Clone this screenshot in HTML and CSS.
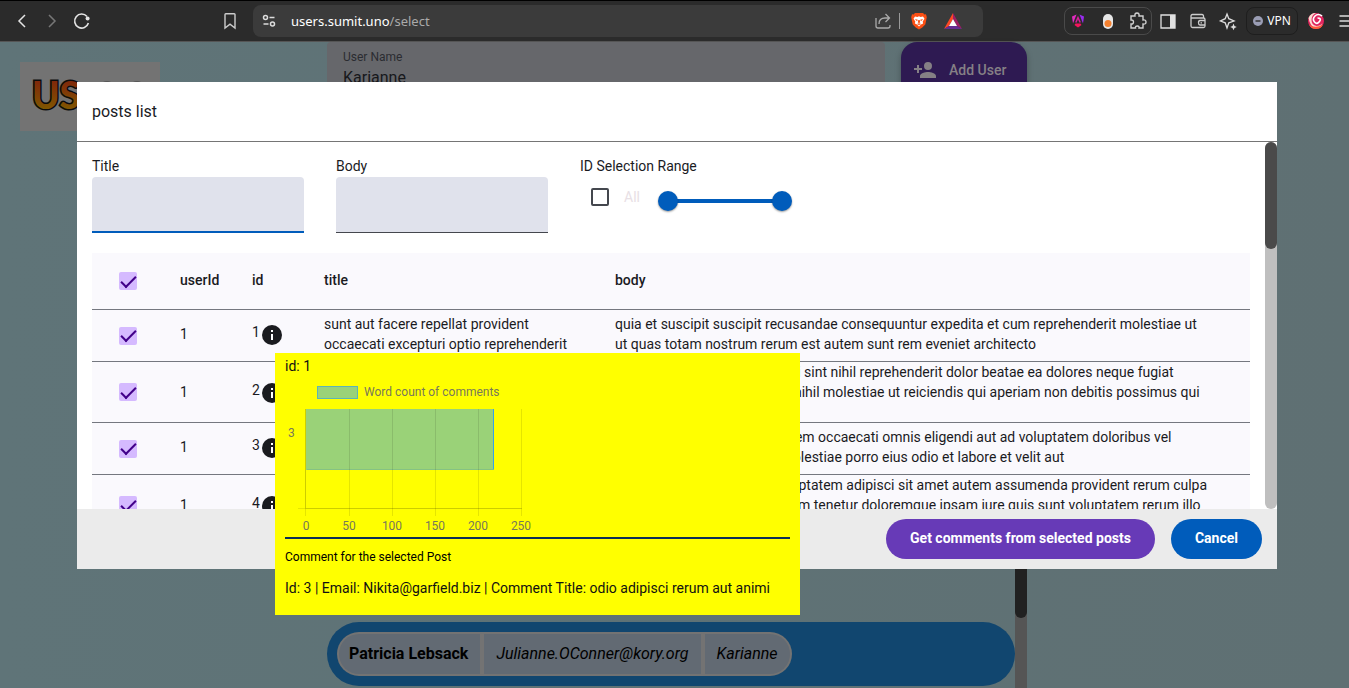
FILE: index.html
```
<!DOCTYPE html>
<html lang="en">
<head>
<meta charset="utf-8">
<title>Posts list</title>
<link rel="stylesheet" href="styles.css">
</head>
<body>
<header class="toolbar">
  <nav class="nav">
    <button class="icon-btn" aria-label="Back"><svg width="24" height="24" viewBox="0 0 24 24"><path d="M15 6 9 12l6 6" stroke="#e4e4e4" stroke-width="1.5"/></svg></button>
    <button class="icon-btn" aria-label="Forward"><svg width="24" height="24" viewBox="0 0 24 24"><path d="m9 6 6 6-6 6" stroke="#777" stroke-width="1.5"/></svg></button>
    <button class="icon-btn" aria-label="Reload"><svg width="24" height="24" viewBox="0 0 24 24"><path d="M18.400 14A7 7 0 1 1 17 7.500" stroke="#e4e4e4" stroke-width="1.600"/><circle cx="17.600" cy="9.500" r="2" fill="#e4e4e4"/></svg></button>
    <button class="icon-btn bookmark" aria-label="Bookmark"><svg width="24" height="24" viewBox="0 0 24 24"><path d="M7 5.500q0-.8.8-.8h8.400q.8 0 .8.8v13.500l-5-3.800-5 3.800z" stroke="#ccc" stroke-width="1.400"/></svg></button>
  </nav>
  <div class="address">
    <button class="icon-btn" aria-label="Site settings"><svg width="24" height="24" viewBox="0 0 24 24"><g stroke="#ddd" stroke-width="1.500"><circle cx="8.500" cy="8.500" r="2"/><path d="M12.500 8.500h5M6.500 15h5"/><circle cx="15.500" cy="15" r="2"/></g></svg></button>
    <span class="url"><b>users.sumit.uno</b>/select</span>
    <button class="icon-btn share" aria-label="Share"><svg width="24" height="24" viewBox="0 0 24 24"><path d="M5 9v8q0 2 2 2h10q2 0 2-2v-1M8 15q0-6 6-6h4M14.500 5l4 4-4 4" stroke="#aaa" stroke-width="1.300"/></svg></button>
    <span class="sep"></span>
    <button class="icon-btn" aria-label="Brave Shields"><svg width="24" height="24" viewBox="0 0 24 24"><path fill="#fb4f14" d="M8 4h8l1.500 1.500 1.500-.2.800 3-1.500 7.200-3 3-3.300 2-3.300-2-3-3L4.200 8.300l.8-3 1.500.2z"/><path fill="#fff" d="m8 7.500 2.500.4L12 7.300l1.500.6 2.500-.4 1.500 2.300-1.800 2.700.4 2-2.100 1-2 2-2-2-2.100-1 .4-2-1.800-2.700z"/><path fill="#fb4f14" d="m7.800 10 3 .8-.8 1.500zM16.200 10l-3 .8.800 1.500zM11.300 11h1.400l.5 2.500L12 14l-1.200-.5zM9.800 15l2.200-.8 2.200.8-2.200 1z"/></svg></button>
    <button class="icon-btn rewards" aria-label="Rewards"><svg width="24" height="24" viewBox="0 0 24 24"><path d="M12 4 3 20l5-3 4-7z" fill="#ff4724"/><path d="m12 4 9 16-5-3-4-7z" fill="#9e1f63"/><path d="M3 20h18l-5-3H8z" fill="#662d91"/><path d="m12 10 4 7H8z" fill="#fff"/></svg></button>
  </div>
  <div class="tools">
    <div class="extensions">
      <button class="icon-btn" aria-label="Angular"><svg width="24" height="24" viewBox="0 0 24 24"><path fill="#e22cc0" d="m6 7.500 4.500-2L7 14.500z"/><path fill="#f5145c" d="m8.500 16 1-1.500h5l1 1.500-3.500 2.500z"/><path fill="#9a2cf0" d="m18 7.500-4.500-2L17 14.500z"/><path d="m9.800 13.500 2.200-5 2.200 5" stroke="#d81f9c" stroke-width="1.500"/></svg></button>
      <button class="icon-btn" aria-label="Toggle extension"><svg width="24" height="24" viewBox="0 0 24 24"><rect x="7" y="5" width="10" height="15" rx="5" fill="#e6e6e6"/><circle cx="12" cy="14.500" r="3.500" fill="#f5812f"/></svg></button>
      <button class="icon-btn" aria-label="Extensions"><svg width="24" height="24" viewBox="0 0 24 24"><path d="M5 7h4q-.5-3 2-3t2 3h4v4q3-.500 3 2t-3 2v4h-4q.5-2-1.700-2T9.500 19H5v-4q2.500.2 2.500-2T5 11z" stroke="#d0d0d0" stroke-width="1.400"/></svg></button>
    </div>
    <button class="icon-btn" aria-label="Sidebar"><svg width="24" height="24" viewBox="0 0 24 24"><path d="M5 6h14v13H5z" stroke="#e0e0e0" stroke-width="1.300"/><path d="M14 6h5v13h-5z" fill="#e0e0e0"/></svg></button>
    <button class="icon-btn" aria-label="Wallet"><svg width="24" height="24" viewBox="0 0 24 24"><path d="M17.500 9V7q0-1.500-1.500-1.500H6.500Q5 5.500 5 7v10q0 1.500 1.500 1.500h11q1.500 0 1.500-1.500v-6.500Q19 9 17.500 9H5M19 11.500h-5q-1.500 0-1.500 2.200t1.500 2.300h5M14.500 13.800h1.500" stroke="#ccc" stroke-width="1.300"/></svg></button>
    <button class="icon-btn" aria-label="Leo AI"><svg width="24" height="24" viewBox="0 0 24 24"><path d="m11 5 1.800 4.700L18 12l-5.200 1.800L11 19l-1.800-5.200L4.500 12l4.700-2.300z" stroke="#ddd" stroke-width="1.300"/><path fill="#ddd" d="m17.500 14.500 1 2.500 2.300 1-2.300 1-1 2.300-1-2.300-2.300-1 2.300-1z"/></svg></button>
    <button class="vpn"><svg width="10" height="10" viewBox="0 0 10 10"><circle cx="5" cy="5" r="5" fill="#9a9db4"/><path d="M2.500 5h5" stroke="#333" stroke-width="1.500"/></svg>VPN</button>
    <button class="icon-btn" aria-label="Profile"><svg width="24" height="24" viewBox="0 0 24 24"><circle cx="12" cy="12" r="8" fill="#e0245e"/><path d="M4.500 9Q7 3.500 12 4q-4.500 2-4.500 7t5 6q4 0 6-3-2 5-7 4.800T4.500 9z" fill="#ffd9cf"/><path d="M18 7q-4-3-7 0t-.5 6 5-.5-2-3.500" stroke="#fff" stroke-width="1.600"/><path d="M5 15.500q6 4.500 14 0-2 4.500-7 4.500t-7-4.500z" fill="#ff5a3c"/></svg></button>
    <button class="icon-btn" aria-label="Menu"><svg width="24" height="24" viewBox="0 0 24 24"><path d="M5.500 7H20M5.500 12H20M5.500 17H20" stroke="#ddd" stroke-width="1.500"/></svg></button>
  </div>
</header>

<main class="page">
  <div class="logo"><svg width="140" height="69" viewBox="0 0 140 69" role="img" aria-label="Users">
    <defs><linearGradient id="flame" x1="0" y1="0" x2="0" y2="1"><stop offset=".2" stop-color="#80280a"/><stop offset=".9" stop-color="#805c00"/></linearGradient></defs>
    <text class="logo-text" x="12" y="47">US</text><path d="M83 20q4-2 8 0zM113 20q4-2 8 0z" fill="#555"/></svg></div>
  <section class="users">
    <div class="filter-row">
      <div class="user-field"><label for="user-name">User Name</label><input id="user-name" value="Karianne"></div>
      <button class="add-user"><svg width="24" height="24" viewBox="0 0 24 24"><path fill="#858085" d="M15 12a4 4 0 1 0 0-8 4 4 0 0 0 0 8zM6 10V7H4v3H1v2h3v3h2v-3h3v-2zm9 4c-2.700 0-8 1.300-8 4v2h16v-2c0-2.700-5.300-4-8-4z"/></svg>Add User</button>
    </div>
    <div class="user-list">
      <article class="user-card"><div class="user-cells"><strong>Patricia Lebsack</strong><em>Julianne.OConner@kory.org</em><em>Karianne</em></div></article>
      <div class="list-scroll"><div class="list-thumb"></div></div>
    </div>
  </section>

  <div class="overlay">
    <section class="dialog" role="dialog" aria-labelledby="dialog-title">
      <h2 class="dialog-title" id="dialog-title">posts list</h2>
      <div class="dialog-main">
        <div class="dialog-content">
          <div class="filters">
            <div class="filter"><label for="f-title">Title</label><input class="text-box active" id="f-title" type="text"></div>
            <div class="filter"><label for="f-body">Body</label><input class="text-box" id="f-body" type="text"></div>
            <div class="filter"><span>ID Selection Range</span>
              <div class="range-row">
                <label class="all"><input class="check" type="checkbox">All</label>
                <div class="slider"><input type="range" min="1" max="100" value="1" aria-label="From ID"><input type="range" min="1" max="100" value="100" aria-label="To ID"></div>
              </div>
            </div>
          </div>
          <table class="posts">
            <colgroup><col class="c-check"><col class="c-num"><col class="c-num"><col class="c-title"><col></colgroup>
            <thead><tr><th class="pick"><input class="check" type="checkbox" checked aria-label="Select all"></th><th>userId</th><th>id</th><th>title</th><th>body</th></tr></thead>
            <tbody>
              <tr><td class="pick"><input class="check" type="checkbox" checked aria-label="Select post 1"></td><td>1</td><td><span class="id">1<svg width="24" height="24" viewBox="0 0 24 24"><circle cx="12" cy="12" r="10" fill="#1a1b1f"/><path fill="#fff" d="M11 7h2v2h-2zM11 11h2v6h-2z"/></svg></span></td><td>sunt aut facere repellat provident<br>occaecati excepturi optio reprehenderit</td><td>quia et suscipit suscipit recusandae consequuntur expedita et cum reprehenderit molestiae ut<br>ut quas totam nostrum rerum est autem sunt rem eveniet architecto</td></tr>
              <tr class="tall"><td class="pick"><input class="check" type="checkbox" checked aria-label="Select post 2"></td><td>1</td><td><span class="id">2<svg width="24" height="24" viewBox="0 0 24 24"><circle cx="12" cy="12" r="10" fill="#1a1b1f"/><path fill="#fff" d="M11 7h2v2h-2zM11 11h2v6h-2z"/></svg></span></td><td></td><td>est rerum tempore vitae sequi sint nihil reprehenderit dolor beatae ea dolores neque fugiat<br>blanditiis voluptate porro vel nihil molestiae ut reiciendis qui aperiam non debitis possimus qui<br>&nbsp;</td></tr>
              <tr><td class="pick"><input class="check" type="checkbox" checked aria-label="Select post 3"></td><td>1</td><td><span class="id">3<svg width="24" height="24" viewBox="0 0 24 24"><circle cx="12" cy="12" r="10" fill="#1a1b1f"/><path fill="#fff" d="M11 7h2v2h-2zM11 11h2v6h-2z"/></svg></span></td><td></td><td>et iusto sed quo iure voluptatem occaecati omnis eligendi aut ad voluptatem doloribus vel<br>accusantium quis pariatur molestiae porro eius odio et labore et velit aut</td></tr>
              <tr class="tall"><td class="pick"><input class="check" type="checkbox" checked aria-label="Select post 4"></td><td>1</td><td><span class="id">4<svg width="24" height="24" viewBox="0 0 24 24"><circle cx="12" cy="12" r="10" fill="#1a1b1f"/><path fill="#fff" d="M11 7h2v2h-2zM11 11h2v6h-2z"/></svg></span></td><td></td><td>ullam et saepe reiciendis voluptatem adipisci sit amet autem assumenda provident rerum culpa<br>quis hic commodi nesciunt rem tenetur doloremque ipsam iure quis sunt voluptatem rerum illo<br>&nbsp;</td></tr>
            </tbody>
          </table>
        </div>
        <div class="dialog-scroll"><div class="dialog-thumb"></div></div>
      </div>
      <footer class="dialog-actions"><button class="pill purple">Get comments from selected posts</button><button class="pill blue">Cancel</button></footer>
    </section>
  </div>

  <aside class="tooltip" role="tooltip">
    <p class="tip-id">id: 1</p>
    <svg class="chart" width="252" height="160" viewBox="0 0 252 160" role="img" aria-label="Word count of comments">
      <rect x="32.500" y="9.500" width="40" height="12" fill="#9ad278" stroke="#5fb4b4"/>
      <text x="79" y="19">Word count of comments</text>
      <rect x="21" y="32" width="188" height="61" fill="#9ad278"/>
      <path d="M208.500 32v61" stroke="#36a2eb"/><path d="M22 92.500h187" stroke="#84c284"/>
      <g stroke="#000" stroke-opacity=".1"><path d="M20.500 32v107M64.500 32v107M107.500 32v107M150.500 32v107M193.500 32v107M236.500 32v107M13 131.500h224M20.500 32v99M20.500 131.500h216"/></g>
      <text x="3" y="60">3</text>
      <g text-anchor="middle"><text x="21" y="153">0</text><text x="64" y="153">50</text><text x="107" y="153">100</text><text x="150" y="153">150</text><text x="193" y="153">200</text><text x="236" y="153">250</text></g>
    </svg>
    <p class="tip-head">Comment for the selected Post</p>
    <p class="tip-comment">Id: 3 | Email: Nikita@garfield.biz | Comment Title: odio adipisci rerum aut animi</p>
  </aside>
</main>
</body>
</html>
```
FILE: styles.css
```
* { box-sizing: border-box; }
body { margin: 0; height: 100vh; overflow: hidden; display: flex; flex-direction: column; font: 14px/20px Roboto, "Liberation Sans", sans-serif; color: #1a1b1f; }
button { border: 0; padding: 0; background: none; font: inherit; color: inherit; }
input { margin: 0; font: inherit; }
h2, p { margin: 0; }

/* Browser toolbar */
.toolbar { flex: none; height: 42px; display: flex; align-items: center; background: #2b2b2b; border-top: 1px solid #000; border-bottom: 1px solid #555; overflow: hidden; }
.icon-btn { flex: none; width: 24px; height: 24px; }
.icon-btn svg { display: block; fill: none; }
.nav { flex: none; width: 253px; padding: 0 11px 0 10px; display: flex; gap: 6px; }
.bookmark { margin-left: auto; }
.address { flex: 1; height: 32px; padding: 0 18px 0 4px; display: flex; align-items: center; background: #3b3b3b; border-radius: 8px; color: #aaa; }
.url { margin-left: 10px; font: 13px/20px "Noto Sans", sans-serif; }
.url b { font-weight: 400; color: #fff; }
.share { margin-left: auto; }
.sep { width: 1px; height: 16px; margin: 0 7px 0 4px; background: #999; }
.rewards { margin-left: 10px; }
.tools { flex: none; width: 366px; padding-left: 81px; display: flex; align-items: center; gap: 6px; }
.extensions { flex: none; height: 28px; padding: 1px; margin-right: -2px; display: flex; gap: 6px; border: 1px solid #4a4a4a; border-radius: 8px; }
.vpn { flex: none; width: 52px; height: 28px; display: flex; align-items: center; justify-content: center; gap: 4px; border: 1px solid #1e1e1e; border-radius: 8px; font: 12px/16px "Noto Sans", sans-serif; color: #fff; }

/* Page behind the dialog */
.page { flex: 1; min-height: 0; position: relative; display: grid; grid-template-columns: 327px 700px 1fr; background: linear-gradient(90deg, #5f7478, #5f7073); }
.logo { width: 140px; height: 69px; margin: 20px; background: #737373; }
.logo-text { font: 900 37px Lato, sans-serif; fill: url(#flame); stroke: #0b0b0b; stroke-width: 3px; paint-order: stroke; }
.users { display: flex; flex-direction: column; justify-content: space-between; min-height: 0; }
.filter-row { display: flex; gap: 16px; }
.user-field { flex: 1; height: 56px; padding: 5px 16px; display: flex; flex-direction: column; background: #66676b; border-radius: 4px 4px 0 0; color: #2b2c31; font-size: 12px; }
.user-field input { border: 0; padding: 0; margin-top: 1px; background: none; font-size: 16px; color: #17181b; }
.add-user { width: 126px; height: 56px; padding: 0 12px; display: flex; align-items: center; gap: 12px; background: #2e1a52; border-radius: 16px; color: #858085; font-weight: 500; box-shadow: 0 3px 6px #0004; }
.user-list { display: flex; }
.user-card { flex: 1; height: 64px; margin: 92px 0 2px; padding: 10px; background: #11466f; border-radius: 32px; }
.user-cells { width: max-content; height: 44px; display: flex; gap: 4px; padding: 2px; background: #737373; border-radius: 22px; overflow: hidden; font-size: 16px; line-height: 40px; color: #000; }
.user-cells > * { padding: 0 12px; background: #626a73; }
.user-cells > :first-child { padding-left: 10px; border-radius: 20px 0 0 20px; }
.user-cells > :last-child { border-radius: 0 20px 20px 0; }
.list-scroll { width: 12px; background: #555; }
.list-thumb { height: 88px; background: #212121; border-radius: 0 0 6px 6px; }

/* Dialog */
.overlay { position: absolute; inset: 0; padding: 40px 72px 119px 77px; display: flex; }
.dialog { flex: 1; min-width: 0; display: flex; flex-direction: column; background: #fff; }
.dialog-title { flex: none; height: 60px; padding: 0 15px; border-bottom: 1px solid #757575; font-size: 16px; font-weight: 400; line-height: 59px; }
.dialog-main { flex: 1; min-height: 0; display: flex; }
.dialog-content { flex: 1; min-width: 0; overflow: hidden; padding: 14px 15px; }
.dialog-scroll { flex: none; width: 12px; background: #bfbfbf; border-radius: 6px; }
.dialog-thumb { height: 107px; background: #4a4a4a; border-radius: 6px; }
.filters { display: flex; gap: 32px; margin-bottom: 20px; }
.filter { width: 212px; display: flex; flex-direction: column; gap: 1px; }
.text-box { height: 56px; padding: 0 16px; background: #e0e2ec; border: 0; border-bottom: 1px solid #44474e; border-radius: 4px 4px 0 0; outline: 0; }
.text-box.active { border-bottom: 2px solid #005cbb; }
.range-row { display: flex; padding-left: 11px; }
.all { height: 40px; width: 67px; display: flex; align-items: center; gap: 15px; color: #e8e0e5; }
.check { appearance: none; flex: none; display: grid; place-items: center; width: 18px; height: 18px; border: 2px solid #44474e; border-radius: 2px; }
.check:checked { border: 0; background: #d5baff; }
.check:checked::after { content: ""; width: 13px; height: 6px; margin-bottom: 3px; border: solid #42008a; border-width: 0 0 2px 2px; transform: rotate(-45deg); }
.slider { width: 134px; height: 48px; display: grid; align-items: center; background: linear-gradient(#005cbb, #005cbb) center / 114px 4px no-repeat; }
.slider input { grid-area: 1 / 1; appearance: none; width: 100%; height: 20px; background: none; pointer-events: none; }
.slider input::-webkit-slider-thumb { appearance: none; width: 20px; height: 20px; border-radius: 50%; background: #005cbb; box-shadow: 0 1px 2px #0006; pointer-events: auto; }

.posts { width: 100%; table-layout: fixed; border-collapse: separate; border-spacing: 0; background: #faf9fd; }
.c-check, .c-num { width: 72px; }
.c-title { width: 291px; }
.posts th, .posts td { height: 52px; padding: 0 0 3px 16px; border-bottom: 1px solid #74777f; text-align: left; white-space: nowrap; }
.posts th { height: 57px; font-weight: 500; }
.posts .tall td { padding-bottom: 0; }
.posts .pick { padding: 0 0 0 27px; }
.check { vertical-align: middle; }
.id { display: flex; align-items: flex-start; }
.id svg { flex: none; margin-top: 1px; }

.dialog-actions { flex: none; height: 60px; padding: 0 15px; display: flex; align-items: center; justify-content: flex-end; gap: 16px; background: #ebebeb; }
.pill { height: 40px; padding: 0 24px 2px; border-radius: 20px; color: #fff; font-weight: 700; }
.purple { background: #673ab7; }
.blue { background: #005cbb; }

/* Comment tooltip */
.tooltip { position: absolute; left: 275px; top: 311px; width: 525px; padding: 3px 10px 17px; background: #ff0; color: #111; }
.chart { display: block; margin-top: 1px; overflow: visible; }
.chart text { font-size: 12px; fill: #666; fill-opacity: .9; }
.tip-head { padding-top: 8px; border-top: 2px solid #0b2f55; font-size: 12px; color: #000; }
.tip-comment { margin-top: 11px; white-space: nowrap; }
```
